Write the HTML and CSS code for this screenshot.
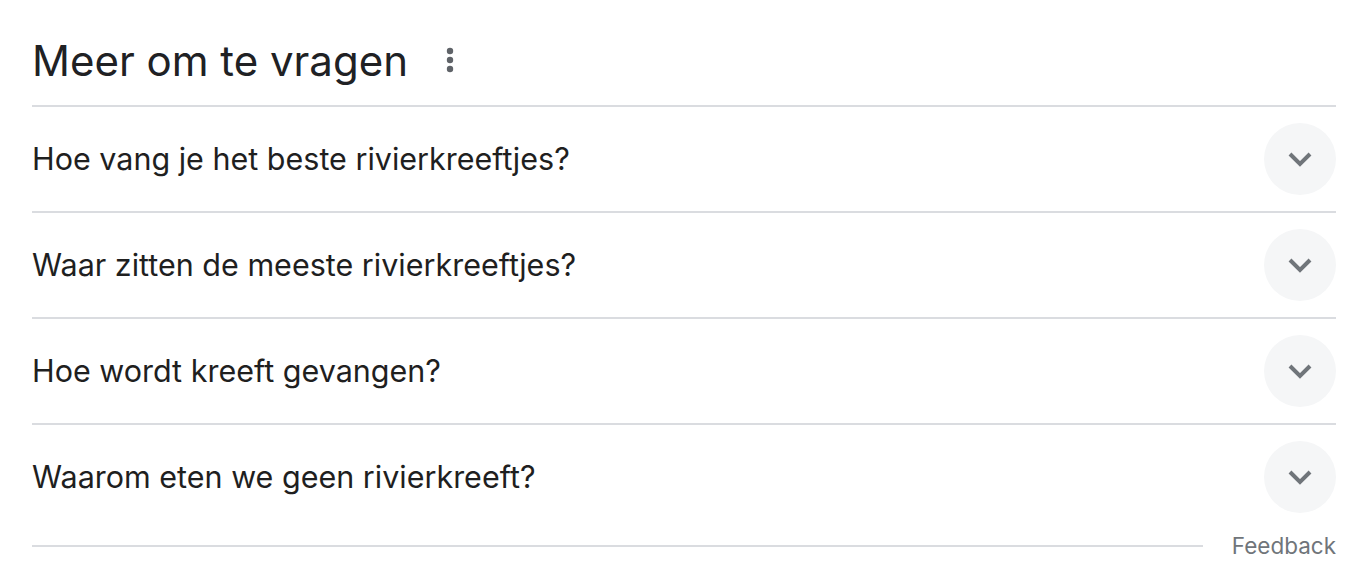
FILE: index.html
```html
<!DOCTYPE html>
<html lang="nl">
<head>
<meta charset="utf-8">
<title>Meer om te vragen</title>
<link rel="stylesheet" href="styles.css">
</head>
<body>
<div class="paa">
  <div class="paa-header">
    <h2 class="paa-title">Meer om te vragen</h2>
    <button class="paa-more" aria-label="Meer opties">
      <svg width="8" height="26" viewBox="0 0 8 26"><circle cx="4" cy="4" r="3.2"/><circle cx="4" cy="13" r="3.2"/><circle cx="4" cy="22" r="3.2"/></svg>
    </button>
  </div>
  <div class="paa-row">
    <span class="paa-q">Hoe vang je het beste rivierkreeftjes?</span>
    <span class="paa-toggle"><svg width="24" height="16" viewBox="0 0 24 16"><path d="M2 3 L12 13 L22 3"/></svg></span>
  </div>
  <div class="paa-row">
    <span class="paa-q">Waar zitten de meeste rivierkreeftjes?</span>
    <span class="paa-toggle"><svg width="24" height="16" viewBox="0 0 24 16"><path d="M2 3 L12 13 L22 3"/></svg></span>
  </div>
  <div class="paa-row">
    <span class="paa-q">Hoe wordt kreeft gevangen?</span>
    <span class="paa-toggle"><svg width="24" height="16" viewBox="0 0 24 16"><path d="M2 3 L12 13 L22 3"/></svg></span>
  </div>
  <div class="paa-row paa-row-last">
    <span class="paa-q">Waarom eten we geen rivierkreeft?</span>
    <span class="paa-toggle"><svg width="24" height="16" viewBox="0 0 24 16"><path d="M2 3 L12 13 L22 3"/></svg></span>
  </div>
  <div class="paa-footer">
    <div class="paa-footer-line"></div>
    <span class="paa-feedback">Feedback</span>
  </div>
</div>
</body>
</html>
```
FILE: styles.css
```css
html, body {
  margin: 0;
  padding: 0;
  background: #ffffff;
}
body {
  font-family: Inter, Roboto, "Liberation Sans", Arial, sans-serif;
  color: #202124;
}
.paa {
  width: 1304px;
  margin-left: 32px;
}
.paa-header {
  display: flex;
  align-items: center;
  height: 105px;
  border-bottom: 2px solid #dadce0;
}
.paa-title {
  margin: 0;
  font-weight: 400;
  font-size: 42px;
  line-height: 52px;
  color: #202124;
  padding-top: 17px;
}
.paa-more {
  border: 0;
  background: none;
  padding: 0;
  margin-left: 38px;
  margin-top: 15px;
  width: 8px;
  height: 26px;
  display: flex;
}
.paa-more svg { fill: #5f6368; }
.paa-row {
  display: flex;
  align-items: center;
  justify-content: space-between;
  height: 104px;
  border-bottom: 2px solid #dadce0;
}
.paa-row-last {
  border-bottom: 0;
}
.paa-q {
  font-size: 30.5px;
  line-height: 40px;
  color: #1f1f1f;
}
.paa-toggle {
  width: 72px;
  height: 72px;
  border-radius: 50%;
  background: #f5f6f7;
  display: flex;
  align-items: center;
  justify-content: center;
}
.paa-toggle svg {
  fill: none;
  stroke: #70757a;
  stroke-width: 4;
}
.paa-footer {
  display: flex;
  align-items: center;
  gap: 29px;
  height: 34px;
}
.paa-footer-line {
  flex: 1;
  height: 2px;
  background: #dadce0;
}
.paa-feedback {
  font-size: 22.5px;
  line-height: 30px;
  color: #70757a;
}
```
